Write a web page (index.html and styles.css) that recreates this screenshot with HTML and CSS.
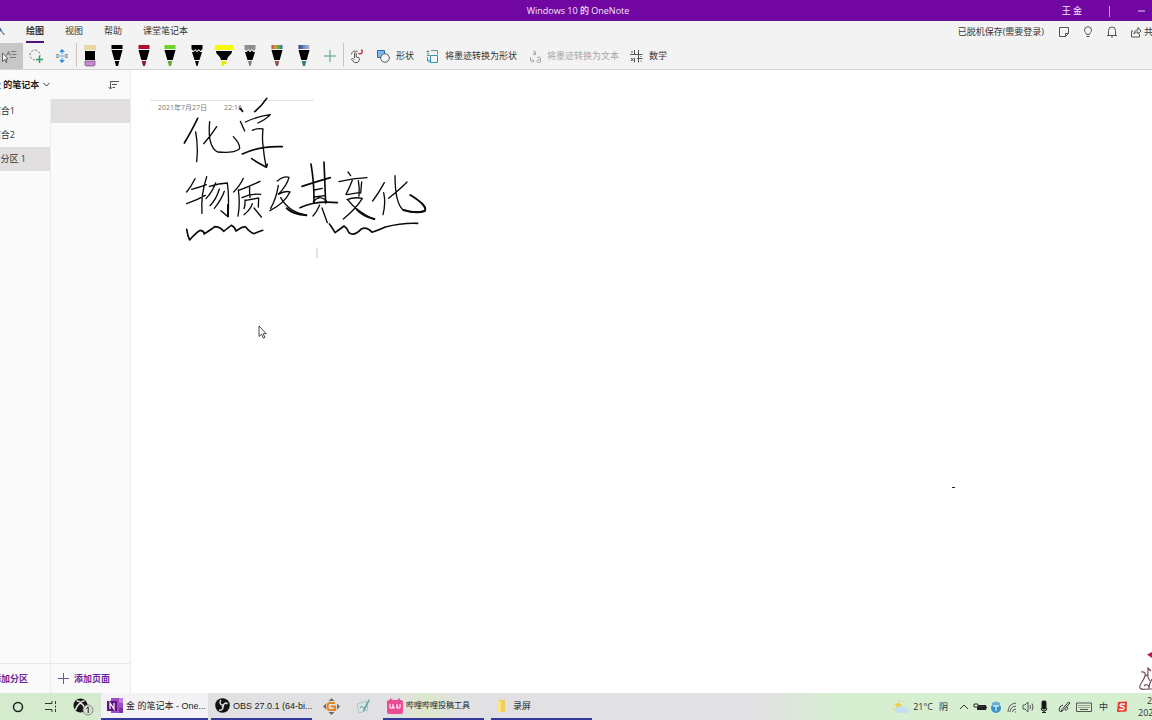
FILE: index.html
```html
<!DOCTYPE html>
<html lang="zh-CN">
<head>
<meta charset="utf-8">
<title>Windows 10 的 OneNote</title>
<link rel="stylesheet" href="styles.css">
</head>
<body>
<div class="desktop">
  <header class="titlebar">
    <h1 class="titlebar-name">Windows 10 的 OneNote</h1>
    <div class="titlebar-right">
      <span class="user">王 金</span>
      <span class="titlebar-sep"></span>
      <button class="minimize" aria-label="最小化"><svg width="8" height="8" viewBox="0 0 8 8"><path d="M1 4h7" stroke="#e6d2f0"/></svg></button>
    </div>
  </header>

  <div class="ribbon">
    <div class="menu-row">
      <nav class="tabs">
        <button class="tab tab-cut">插入</button>
        <button class="tab tab-active">绘图</button>
        <button class="tab">视图</button>
        <button class="tab">帮助</button>
        <button class="tab">课堂笔记本</button>
      </nav>
      <div class="menu-right">
        <span class="save-state">已脱机保存(需要登录)</span>
        <button class="icon-btn" aria-label="便笺"><svg class="line" width="12" height="12" viewBox="0 0 12 12"><path d="M1.5 1.5h9v6l-3 3h-6zM7.500 10.500v-3h3"/></svg></button>
        <button class="icon-btn" aria-label="提示"><svg class="line" width="12" height="12" viewBox="0 0 12 12"><path d="M4.500 8.500C4.500 7 2.500 6.200 2.500 4.200a3.500 3.500 0 0 1 7 0C9.500 6.200 7.500 7 7.500 8.500zM4.500 10.500h3"/></svg></button>
        <button class="icon-btn" aria-label="通知"><svg class="line" width="12" height="12" viewBox="0 0 12 12"><path d="M1 9.500h10M2.500 9.500V4.500a3.500 3.500 0 0 1 7 0v5M5 11h2"/></svg></button>
        <button class="share"><svg class="line" width="12" height="12" viewBox="0 0 12 12"><path d="M3 5H1.500v6h8V8M4 8c0-3 2-4 4-4V1.500L11 5 8 8V6C6 6 5 6.500 4 8z"/></svg><span class="share-text">共享</span></button>
      </div>
    </div>

    <div class="tools">
      <button class="tool-select" aria-label="选择对象或文本"><svg width="16" height="14" viewBox="0 0 16 14"><path d="M1.500 4v8.500l2-2 1.500 3 1-.5L4.800 10H7z" fill="#fff" stroke="#444" stroke-width=".8"/><path d="M5.500 6.500l2-4 2 4M6.200 5h2.600M10 2.500h5.500M11 5.500h4.500M9 8.500h6" fill="none" stroke="#666" stroke-width=".8"/></svg></button>
      <button class="tool" aria-label="套索选择"><svg width="16" height="16" viewBox="0 0 16 16" fill="none"><circle cx="7" cy="7" r="5" stroke="#777" stroke-dasharray="2.200 1.600"/><path d="M8 8h8v8H8z" fill="#f4f3f3"/><path d="M11.500 8v7M8 11.500h7" stroke="#2f9a63" stroke-width="1.500"/></svg></button>
      <button class="tool" aria-label="插入空间"><svg width="14" height="14" viewBox="0 0 14 14" fill="none"><path d="M1 5.500h3M10 5.500h3M1 8.500h3M10 8.500h3" stroke="#999"/><path d="M7 5V.8M4.800 3 7 .8 9.200 3M7 9v4.200M4.800 11 7 13.200 9.200 11" stroke="#2b88d8" stroke-width="1.100"/><path d="M1 7h12" stroke="#5a9bd0"/></svg></button>
      <span class="tool-sep"></span>
      <div class="pens">
        <button class="pen" aria-label="橡皮擦"><svg width="12" height="22" viewBox="0 0 12 22"><path d="M0 0h12v5H0z" fill="#e8d9a4"/><path d="M1 6h10v9H1z" fill="#000"/><path d="M1 16h10v4l-1 1H2l-1-1z" fill="#c48ccb" stroke="#76487c" stroke-width=".7"/></svg></button>
        <button class="pen" aria-label="黑色笔"><svg width="12" height="22" viewBox="0 0 12 22"><path d="M.5 0h11v4H.5z" fill="#000"/><path d="M.5 5h11L8.700 15H3.300zM3.700 16h4.600L7 21H5z"/></svg></button>
        <button class="pen" aria-label="红色笔"><svg width="12" height="22" viewBox="0 0 12 22"><path d="M.5 0h11v4H.5z" fill="#b30c32"/><path d="M.5 5h11L8.700 15H3.300z"/><path d="M3.700 16h4.600L7 21H5z" fill="#8f1732"/></svg></button>
        <button class="pen" aria-label="绿色笔"><svg width="12" height="22" viewBox="0 0 12 22"><path d="M.5 0h11v4H.5z" fill="#6fd42a"/><path d="M.5 5h11L8.700 15H3.300z"/><path d="M3.700 16h4.600L7 21H5z" fill="#5fa92b"/></svg></button>
        <button class="pen" aria-label="黑色铅笔"><svg width="12" height="22" viewBox="0 0 12 22"><path d="M.5 0h11v4l-2 2-2-2L6 6 4.500 4l-2 2-2-2z"/><path d="M1 7l1.500 0L4.500 5.500 6 7.500l1.500-2 2 1.500H11L8.500 15h-5zM4 16h4l-1.500 5h-1z"/></svg></button>
        <button class="pen" aria-label="黄色荧光笔"><svg width="20" height="22" viewBox="0 0 20 22"><path d="M1 0h18l.5 5H.5z" fill="#f8fa00"/><path d="M2 6h16c0 4-4 4-5 9H7C6 10 2 10 2 6z"/><path d="M7.500 16h5v2l-4 3h-1z" fill="#e7e900"/></svg></button>
        <button class="pen" aria-label="灰色铅笔"><svg width="12" height="22" viewBox="0 0 12 22"><path d="M.5 0h11v4l-2 2-2-2L6 6 4.500 4l-2 2-2-2z" fill="#8c8e91"/><path d="M1 7l1.500 0L4.500 5.500 6 7.500l1.500-2 2 1.500H11L8.500 15h-5z"/><path d="M4 16h4l-1.500 5h-1z" fill="#777"/></svg></button>
        <button class="pen" aria-label="彩虹笔"><svg width="12" height="22" viewBox="0 0 12 22"><defs><linearGradient id="rainbow"><stop stop-color="#cc3340"/><stop offset=".3" stop-color="#db9a32"/><stop offset=".65" stop-color="#57a950"/><stop offset="1" stop-color="#4169b0"/></linearGradient></defs><path d="M.5 0h11v4H.5z" fill="url(#rainbow)"/><path d="M.5 5h11L8.700 15H3.300z"/><path d="M3.700 16h4.600L7 21H5z" fill="#91504d"/></svg></button>
        <button class="pen" aria-label="银河笔"><svg width="12" height="22" viewBox="0 0 12 22"><defs><linearGradient id="galaxy"><stop stop-color="#27436b"/><stop offset=".5" stop-color="#6a8fbd"/><stop offset="1" stop-color="#b7bed0"/></linearGradient></defs><path d="M.5 0h11v4H.5z" fill="url(#galaxy)"/><path d="M.5 5h11L8.700 15H3.300z"/><path d="M3.700 16h4.600L7 21H5z" fill="#3e7888"/></svg></button>
      </div>
      <button class="tool" aria-label="添加笔"><svg width="12" height="12" viewBox="0 0 12 12"><path d="M6 0v12M0 6h12" stroke="#4e9f78"/></svg></button>
      <span class="tool-sep tool-sep-tight"></span>
      <button class="tool" aria-label="用触摸绘图"><svg width="14" height="15" viewBox="0 0 14 15" fill="none" stroke="#555"><path d="M4.500 9V4.500c0-1 1.700-1 1.700 0V8l3 .8c1 .4 0 3-1.500 4.700H4.500L1.500 10.500c0-1.500 2-1 3 0M1.500 5.500c0-3 3-4 6-3"/><path d="M8 4.500c4 1.500 6-3.500 3-3.500" stroke="#d02747" stroke-width="1.300"/></svg></button>
      <button class="labelled"><svg width="13" height="13" viewBox="0 0 13 13"><path d="M.5.500h7v7h-7z" fill="#7fb8ec" stroke="#2270b5"/><circle cx="8" cy="8" r="4.300" fill="#f8f8f8" stroke="#555"/></svg>形状</button>
      <button class="labelled"><svg width="13" height="13" viewBox="0 0 13 13" fill="none"><path d="M5 .5h6.500v4M2 5v-4.500M.5 1.500h3M1 5.500h3" stroke="#7b8b92"/><path d="M4.500 5.500h7v7h-7zM1.500 7v4h3M3 9.500 4.500 11 3 12.500" stroke="#3296b4"/></svg>将墨迹转换为形状</button>
      <button class="labelled labelled-off" disabled><svg width="13" height="13" viewBox="0 0 13 13" fill="none" stroke="#a5a5a5"><path d="M6.500 4.500c-3 1-3-2 0-1.500 0-2-1-2-2.500-1.500M6.500 2v3M1.500 7v4h3.500M3.500 9.500 5 11l-1.500 1.500M8 7.500c3-1 3.500 0 3.500 2v3M11.500 9.500c-4-.5-4.500 3-2 3 1 0 2-.5 2-1.500"/></svg>将墨迹转换为文本</button>
      <button class="labelled"><svg width="13" height="13" viewBox="0 0 13 13" fill="none" stroke="#555"><path d="M4.500 0v4.500M8.500 0v12.500M4.500 8v4.500M0 4.500h12.500M1 8l2.500 3M3.500 8 1 11M7 8.500h5.500"/><path d="M11 10.500v1M11 6v1M2 1v2"/></svg>数学</button>
    </div>
  </div>

  <main class="workspace">
    <aside class="sidebar">
      <div class="notebook">
        <button class="notebook-name">金 的笔记本<svg width="7" height="5" viewBox="0 0 7 5"><path d="M.5 1l3 3 3-3" fill="none" stroke="#333"/></svg></button>
        <button class="sort" aria-label="排序"><svg class="line" width="11" height="10" viewBox="0 0 11 10"><path d="M2 1.500h9M4 4.500h5M5 7.500h2M2.500 1v8M.5 7l2 2 2-2"/></svg></button>
      </div>
      <div class="columns">
        <nav class="sections">
          <button class="section section-short">综合1</button>
          <button class="section section-short">综合2</button>
          <button class="section section-current">新分区 1</button>
          <button class="add add-section">添加分区</button>
        </nav>
        <nav class="pages">
          <button class="page" aria-label="无标题页"></button>
          <button class="add add-page"><svg width="11" height="11" viewBox="0 0 11 11"><path d="M5.500 0v11M0 5.500h11" stroke="#795291"/></svg>添加页面</button>
        </nav>
      </div>
    </aside>

    <article class="note">
      <div class="note-head"><span>2021年7月27日</span><time>22:16</time></div>
      <svg class="ink" viewBox="0 0 840 510" role="img" aria-label="手写笔记">
        <!-- first line -->
        <path class="w2" d="M83 85Q62 128 43 159M210 55l8 9M254 65l6-5M290 25Q276 47 254 65"/>
        <path d="M77 126Q85 167 80 215M119 95Q112 170 143 186Q190 191 208 177Q213 165 190 140M140 110Q121 140 101 161M211 94l13 29M226 96Q260 80 301 74Q288 88 264 99M247 121Q262 114 279 117Q276 145 279 166Q282 200 288 228"/>
        <path class="w3" d="M217 192Q269 167 337 170M245 206Q263 218 289 232L292 223"/>
        <!-- second line -->
        <path d="M75 266Q65 287 50 306M65 298Q89 292 109 284M110 260Q92 314 96 370M50 341Q83 329 106 316M137 279Q128 304 108 326M118 289Q148 280 172 279Q178 323 174 380M148 297Q139 328 120 347M163 304Q154 330 133 355M174 380L153 362"/>
        <path d="M220 265Q211 286 191 306M205 300Q211 342 204 378M206 301Q241 288 270 274M239 291Q238 306 240 322M216 323Q243 310 272 313M225 330Q226 345 222 356M227 331L266 324L265 351M247 341Q242 359 222 374M252 354L274 381"/>
        <path d="M322 273Q342 256 357 262Q351 286 325 313Q345 301 360 306Q343 340 300 362M325 286Q319 325 302 355M332 323Q358 368 409 375"/>
        <path class="w3" d="M423 222Q433 280 432 340M462 216L467 340M396 289Q436 276 481 263M390 353Q437 331 502 338"/>
        <path d="M432 321l33-4M433 300l24-5M430 335Q450 312 469 333M449 345Q441 365 429 378M456 354L472 398"/>
        <path d="M534 246l8 11M507 275Q550 265 591 263M547 271Q539 292 528 313M565 272Q569 292 567 318M575 276L572 309M530 314L572 307M531 329Q553 320 577 325Q558 356 520 387M535 331Q559 364 613 388"/>
        <path d="M643 278Q627 308 608 333M641 308Q648 338 639 374M711 276Q693 295 656 325M675 257Q675 340 700 360Q730 370 765 363"/>
        <path class="w4" d="M700 360Q740 372 764 363Q775 348 721 315M560 358Q580 380 613 387M350 355Q370 374 409 376M174 345L174 379"/>
        <!-- underlines -->
        <path class="w3" d="M50 418Q53 438 59 450Q80 426 91 421Q103 423 102 432Q125 418 134 410Q150 410 161 424Q178 410 184 406Q194 410 198 423Q219 408 227 411Q240 427 252 431Q262 427 278 421"/>
        <path class="w3" d="M478 402Q485 410 495 428Q512 416 522 408Q532 414 537 428Q552 441 575 416Q592 410 606 427Q626 420 646 411Q696 398 743 400"/>
        <path d="M441 474v29" stroke="#d5d5d5"/>
      </svg>
      <svg class="cursor" width="9" height="14" viewBox="0 0 9 14"><path d="M1 1v10.500l2.500-2.300 1.800 4 1.600-.7-1.700-3.800h3z" fill="#fff" stroke="#333" stroke-width=".9"/></svg>
      <span class="ink-dot"></span>
      <svg class="pet" width="14" height="44" viewBox="0 0 14 44" fill="none"><path d="M9 5.500 14 3v6z" fill="#c3183e"/><path d="M3 23q5-1 4 4-1 3-3 6-3 4-2 6 2 2 5 1 4 1 4-2-2-4-5-1M7 27q3 0 3-4V19l3 3M10 23q-1 6 2 9M14 30q-3 5-3 9M10 40h4" stroke="#745158" stroke-width="1.200"/></svg>
    </article>
  </main>

  <footer class="taskbar">
    <div class="system">
      <button class="sys" aria-label="搜索"><svg width="12" height="12" viewBox="0 0 12 12"><circle cx="6" cy="6" r="4.500" fill="none" stroke="#222" stroke-width="1.500"/></svg></button>
      <button class="sys" aria-label="任务视图"><svg width="12" height="11" viewBox="0 0 12 11" fill="none" stroke="#333"><path d="M0 2.500h7V0M0 8.500h7V11M10.500 0v3M10.500 4.500v2M10.500 8v3"/></svg></button>
      <button class="sys" aria-label="Xbox"><svg width="21" height="18" viewBox="0 0 21 18"><circle cx="7.500" cy="7.500" r="7" fill="#161616"/><path d="M2.500 12Q4 7 7.500 5q3.500 2 5 7M3.500 3q2-.5 4 1.500 2-2 4-1.500" fill="none" stroke="#e4efdf" stroke-width="1.500"/><circle cx="15" cy="12" r="5" fill="#d6dcd3" stroke="#777" stroke-width=".8"/><path d="M13.500 10.500 15.200 9v6" fill="none" stroke="#222"/></svg></button>
    </div>
    <button class="task task-current"><svg width="16" height="16" viewBox="0 0 16 16"><path d="M4 0h12v15H4z" fill="#9b4fc6"/><path d="M12 0h4v5h-4z" fill="#c879e5"/><path d="M12 10h4v5h-4z" fill="#7b2fa8"/><path d="M0 3h10v10H0z" fill="#63127f"/><path d="M3 11V5l4 6V5" fill="none" stroke="#fff" stroke-width="1.200"/></svg><span>金 的笔记本 - One...</span></button>
    <button class="task"><svg width="15" height="15" viewBox="0 0 15 15"><circle cx="7.500" cy="7.500" r="7.300" fill="#111"/><path d="M6 2c-2 2-1 5 2 5M12.500 6c-2-2-5 0-4 3M4 12c3 1 5-2 3-4" fill="none" stroke="#d9d9d9" stroke-width="1.500"/></svg><span>OBS 27.0.1 (64-bi...</span></button>
    <div class="pinned-group">
      <button class="pinned" aria-label="格式工厂"><svg width="17" height="17" viewBox="0 0 17 17"><path d="M8.500 0l3 3h-6zM8.500 17l3-3h-6zM0 8.500l3-3v6zM17 8.500l-3-3v6z" fill="#6f6c69"/><path d="M12 5H6.500Q4.500 5 4.500 8.500T6.500 12H12V8.500H8" fill="none" stroke="#e58425" stroke-width="2.200"/></svg></button>
      <button class="pinned" aria-label="手写板"><svg width="17" height="16" viewBox="0 0 17 16"><path d="M2 5l9-3 2 9-9 3z" fill="#d7e5e5" stroke="#a9bcbc" stroke-width=".8"/><path d="M5 9c2-4 3 2 5-1" fill="none" stroke="#649a74"/><path d="M15 1l-5 10-2 2 .5-3L13.500.500z" fill="#6aa0a8"/></svg></button>
    </div>
    <button class="task task-upload"><svg width="16" height="16" viewBox="0 0 16 16"><path d="M3 0l3 2h4l3-2v2h1q2 0 2 2v10q0 2-2 2H2q-2 0-2-2V4q0-2 2-2h1z" fill="#eb4d94"/><path d="M3 6v4h3V6M6 8v2h2M10 6v4h3V6M10 8v2" fill="none" stroke="#fff"/></svg><span>哔哩哔哩投稿工具</span></button>
    <button class="task task-folder"><svg width="10" height="12" viewBox="0 0 10 12"><path d="M1 0h7v12H1z" fill="#f0cf58"/><path d="M1 0l3 2v10H1z" fill="#fae38b"/></svg><span>录屏</span></button>
    <div class="tray">
      <svg width="18" height="14" viewBox="0 0 18 14"><path d="M7 0v2M1 3l2 2M11 2l1-1M0 9h2" stroke="#e8cf55"/><circle cx="6.500" cy="6" r="3" fill="#f4cf43"/><path d="M6 13a3 3 0 0 1 0-6q3-3 6 0 5 0 5 3 0 3-3 3z" fill="#c5dfef"/></svg>
      <span class="temp">21°C</span>
      <span class="weather">阴</span>
      <svg class="tray-icon" viewBox="0 0 16 14" fill="none" stroke="#333"><path d="M4 9l4-4 4 4"/></svg>
      <svg class="tray-icon" viewBox="0 0 16 14"><path d="M5 5h9v5H5z" fill="#222"/><path d="M2 4h4v3H2zM7 6.500h5M14.500 6.500v2" stroke="#333" fill="#d5eece"/></svg>
      <svg class="tray-icon" viewBox="0 0 16 14"><circle cx="8" cy="8" r="5" fill="#3992ca"/><path d="M4 3q4-3 8 0v3H4z" fill="#6baed7"/><path d="M5 6h6M8 6v5" stroke="#fff"/></svg>
      <svg class="tray-icon" viewBox="0 0 16 14" fill="none" stroke="#555"><path d="M4 12Q4 4 12 3M6 12q0-5 6-6M8.500 12q0-3 3.500-3M11 12h1"/></svg>
      <svg class="tray-icon" viewBox="0 0 16 14" fill="none" stroke="#555"><path d="M3 5h2l3-3v10L5 9H3zM10 5q1 2 0 4M12 3.500q2 3.500 0 7"/></svg>
      <svg class="tray-icon" viewBox="0 0 16 14" fill="none" stroke="#222"><rect x="6" y="1" width="4" height="8" rx="1" fill="#111"/><path d="M5 8q0 3 3 3t3-3M8 11v2M6 12.500h4"/></svg>
      <svg class="tray-icon tray-wide" viewBox="0 0 16 14" fill="none" stroke="#333"><path d="M12.500 2 6 9.500l-1 2 2-1L14 3zM7 5Q3 6 3 10q1 3 3 1M9 10q4 0 2-3"/></svg>
      <svg class="tray-icon tray-wide" viewBox="0 0 16 14" fill="none" stroke="#555"><path d="M.5 3h15v8.500H.5z"/><path d="M2.500 5.500h11M2.500 7.500h11" stroke-dasharray="1 1"/><path d="M4 9.500h8"/></svg>
      <span class="ime">中</span>
      <svg class="tray-icon" viewBox="0 0 16 14"><path d="M4 2l9-.5-.5 10L3 12z" fill="#e8372d"/><path d="M11 4H7Q5 5 7 6.500h2Q11.500 8 9 9.500H5" fill="none" stroke="#fff" stroke-width="1.300"/></svg>
      <time class="clock"><span class="clock-time">22:20</span><span>2021/7/27</span></time>
    </div>
  </footer>
</div>
</body>
</html>
```
FILE: styles.css
```css
* { box-sizing: border-box; }

body {
  margin: 0;
  font: 9px/12px "Open Sans", "Noto Sans CJK SC", sans-serif;
  color: #333;
}

button {
  display: flex;
  align-items: center;
  justify-content: center;
  flex: none;
  margin: 0;
  padding: 0;
  border: 0;
  background: none;
  font: inherit;
  color: inherit;
  white-space: nowrap;
}

svg { flex: none; }
.line { fill: none; stroke: #555; }

.desktop {
  display: flex;
  flex-direction: column;
  height: 100vh;
  overflow: hidden;
}

/* Title bar */
.titlebar {
  display: grid;
  grid-template-columns: 1fr auto 1fr;
  align-items: center;
  flex: none;
  height: 21px;
  padding-top: 2px;
  background: #7106a3;
  border-bottom: 1px solid #5d0590;
  color: #f4eaf8;
}
.titlebar-name {
  grid-column: 2;
  margin: 0 0 0 4px;
  font-size: 9px;
  font-weight: 500;
}
.titlebar-right {
  display: flex;
  align-items: center;
  justify-content: flex-end;
}
.titlebar-sep {
  width: 1px;
  height: 11px;
  margin: 0 27px;
  background: #c79bdd;
}
.minimize { margin-right: 7px; }

/* Ribbon */
.ribbon {
  flex: none;
  background: #f4f3f3;
  border-bottom: 1px solid #d4d4d4;
  box-shadow: 0 1px 2px #e8e8e8;
}
.menu-row {
  display: flex;
  justify-content: space-between;
  height: 22px;
}
.tabs { display: flex; gap: 21px; }
.tab { border-bottom: 2px solid transparent; }
.tab-cut { margin-left: -13px; }
.tab-active { border-color: #4b1478; font-weight: 700; }
.menu-right { display: flex; align-items: center; }
.save-state { margin-right: 8px; }
.icon-btn { width: 24px; }
.share { gap: 2px; margin-left: 6px; }
.share-text { width: 8px; overflow: hidden; }

.tools { display: flex; height: 26px; }
.tool-select { width: 23px; padding-right: 5px; background: #c8c7c7; }
.tool { width: 26px; }
.tool-sep { width: 1px; margin: 0 0 2px 1px; background: #c6c6c6; }
.tool-sep-tight { margin-left: 0; }
.pens { display: flex; width: 240px; }
.pen { flex: 1; }
.labelled { gap: 6px; margin-left: 7px; margin-right: 5px; }
.labelled-off { gap: 5px; margin-right: 4px; color: #a8a8a8; }

/* Notebook navigation */
.workspace {
  display: flex;
  flex: 1;
  min-height: 0;
}
.sidebar {
  display: flex;
  flex-direction: column;
  flex: none;
  width: 131px;
  background: #fbfafa;
  border-right: 1px solid #ececec;
}
.notebook {
  display: flex;
  align-items: center;
  justify-content: space-between;
  height: 29px;
  padding-right: 11px;
}
.notebook-name { gap: 4px; margin-left: -8px; font-weight: 700; color: #222; }
.columns { display: flex; flex: 1; }
.sections {
  display: flex;
  flex-direction: column;
  width: 51px;
  border-right: 1px solid #ececec;
  overflow: hidden;
}
.section {
  justify-content: flex-end;
  height: 24px;
  padding-right: 24px;
}
.section-short { padding-right: 35px; }
.section-current { background: #e1dfdf; }
.pages { display: flex; flex-direction: column; flex: 1; }
.page { height: 24px; background: #e1dfdf; }
.add {
  gap: 5px;
  height: 30px;
  margin-top: auto;
  border-top: 1px solid #e8e8e8;
  color: #6f1f9c;
  font-weight: 700;
}
.add-section { justify-content: flex-end; padding-right: 22px; }
.add-page { justify-content: flex-start; padding-left: 7px; }

/* Note canvas */
.note {
  position: relative;
  flex: 1;
  overflow: hidden;
  background: #fff;
}
.note-head {
  display: flex;
  gap: 17px;
  width: 164px;
  margin: 30px 0 0 19px;
  padding: 1px 0 0 8px;
  border-top: 1px solid #e4e4e4;
  font-size: 7px;
  color: #777;
}
.ink {
  position: absolute;
  left: 39px;
  top: 20px;
  width: 280px;
  height: 170px;
  fill: none;
  stroke: #0a0a0a;
  stroke-width: 4px;
  stroke-linecap: round;
  stroke-linejoin: round;
}
.w2, .w3 { stroke-width: 5px; }
.w4 { stroke-width: 6px; }
.cursor { position: absolute; left: 127px; top: 255px; }
.ink-dot {
  position: absolute;
  left: 821px;
  top: 417px;
  width: 3px;
  height: 1px;
  background: #222;
}
.pet { position: absolute; right: 0; bottom: 0; }

/* Taskbar */
.taskbar {
  display: flex;
  align-items: stretch;
  flex: none;
  height: 27px;
  background: linear-gradient(90deg, #d5ebce 0, #d5ebce 96px, #e1e1e3 108px, #e1e1e3 760px, #d7efd1 840px);
}
.system { display: flex; width: 101px; padding-left: 1px; }
.sys { width: 33px; }
.task {
  justify-content: flex-start;
  gap: 3px;
  width: 101px;
  margin-right: 7px;
  padding-left: 4px;
  border-bottom: 2px solid #343899;
  font-family: "Liberation Sans", "Noto Sans CJK SC", sans-serif;
  color: #222;
}
.task-current {
  width: 107px;
  margin-right: 3px;
  padding-left: 6px;
  background: #f3f3f5;
}
.task-upload {
  background: linear-gradient(90deg, transparent 10%, #dce8cc 45%, transparent 75%);
  font-size: 8px;
}
.task-folder { gap: 6px; padding-left: 6px; }
.pinned-group { display: flex; width: 64px; padding-right: 6px; }
.pinned-group { margin-left: -4px; margin-right: 4px; padding-right: 0; }
.pinned { flex: 1; }
.tray {
  display: flex;
  align-items: center;
  flex: none;
  margin-left: auto;
  color: #333;
}
.temp { margin-left: 3px; }
.weather { margin: 0 8px 0 6px; }
.tray-icon { width: 16px; height: 14px; }
.tray-wide { margin-left: 4px; }
.ime { margin: 0 6px 0 7px; }
.clock {
  display: flex;
  flex-direction: column;
  width: 14px;
  margin-left: 8px;
  overflow: hidden;
}
.clock-time { padding-left: 9px; }
```
